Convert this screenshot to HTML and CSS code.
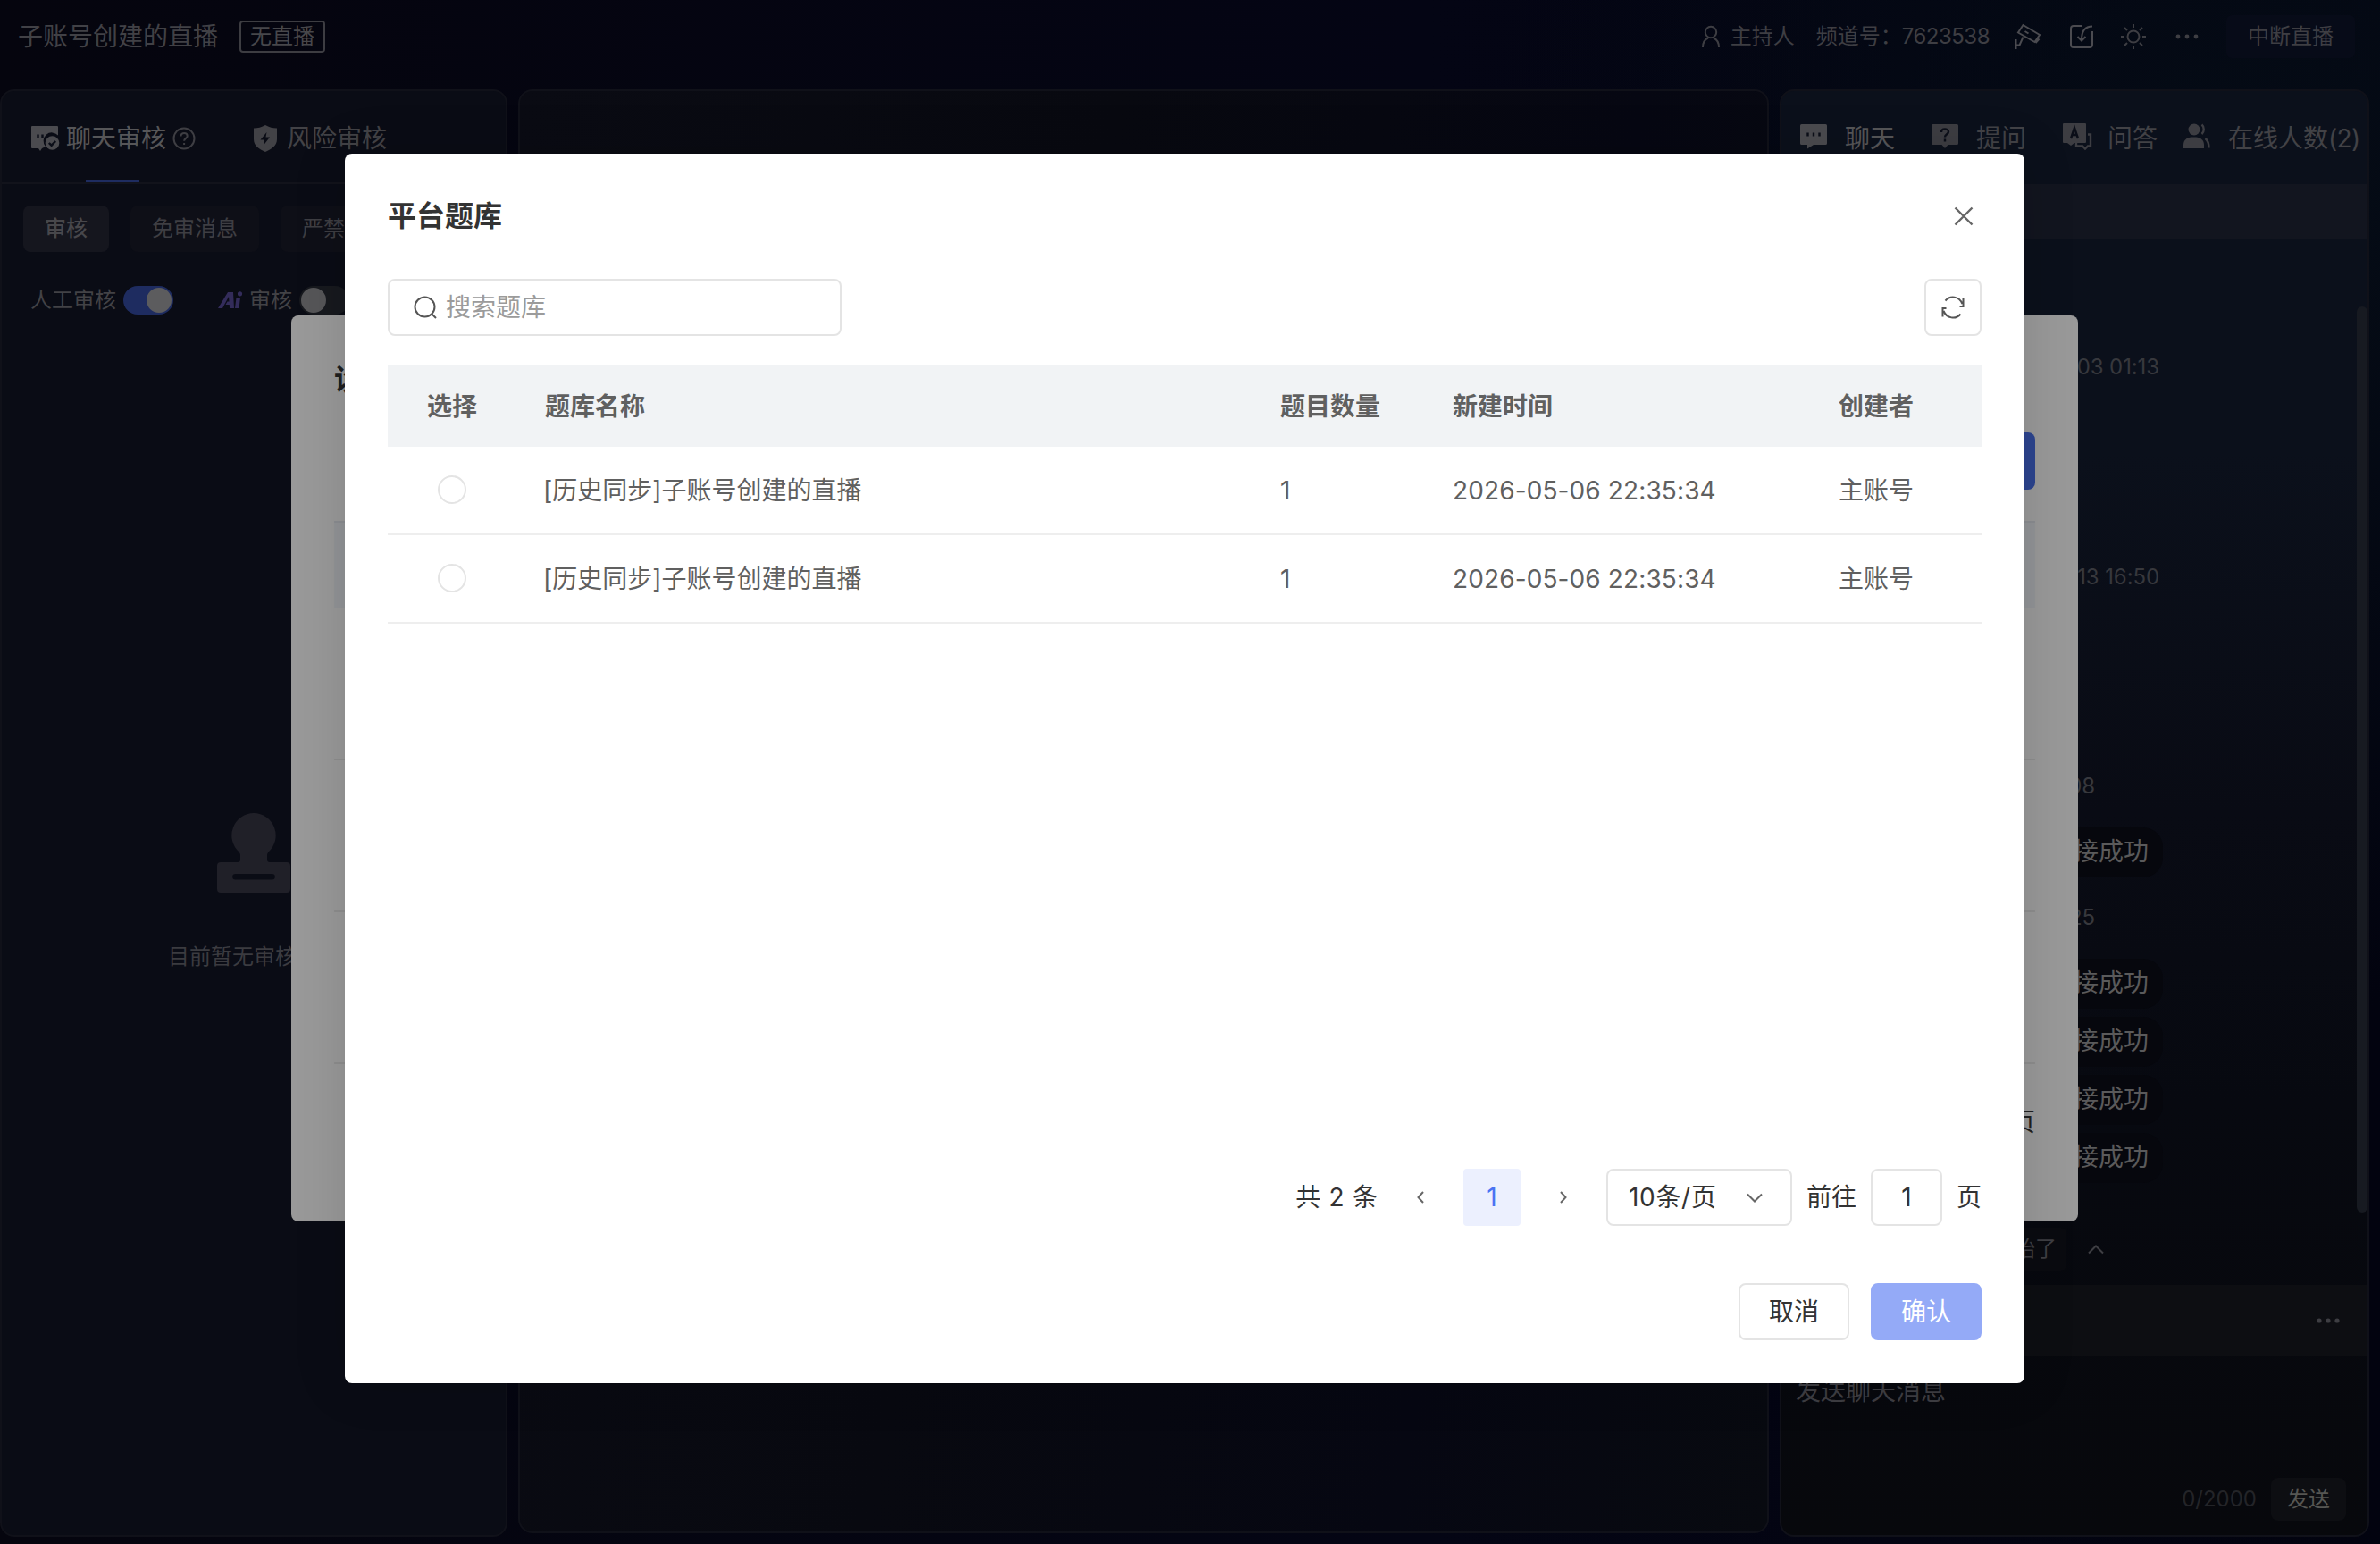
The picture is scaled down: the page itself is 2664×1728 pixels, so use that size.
FILE: index.html
```html
<!DOCTYPE html>
<html lang="zh-CN">
<head>
<meta charset="utf-8">
<title>平台题库</title>
<link rel="stylesheet" href="styles.css">
</head>
<body>
<div class="app">
  <header class="topbar">
    <span class="channel-name">子账号创建的直播</span>
    <span class="live-tag">无直播</span>
    <div class="topbar-right">
      <svg class="i-user" viewBox="0 0 22 26"><circle cx="11" cy="8" r="6.2"/><path d="M2 25c0-6 2.500-9 6-10.500M20 25c0-6-2.500-9-6-10.500"/></svg>
      <span class="role">主持人</span>
      <span class="channel">频道号：<span class="num">7623538</span></span>
      <svg class="i-cam" viewBox="0 0 30 30"><path d="M9.500 2 28 13l-5.500 8L4 10.500zM11.500 9l4 2.500M27.500 17.500l-4 4.500M1.500 18v11M1.500 24.500h4l4-9"/></svg>
      <svg class="i-note" viewBox="0 0 28 28"><path d="M14 2H5a3 3 0 0 0-3 3v18a3 3 0 0 0 3 3h18a3 3 0 0 0 3-3V8M26 2.500c-7 0-12 4-12 15M9.500 14l4.500 4.500 4.500-4.500"/></svg>
      <svg class="i-sun" viewBox="0 0 30 30"><circle cx="15" cy="15" r="6.500"/><path d="M15 1v4M15 25v4M1 15h4M25 15h4M5 5l3 3M22 22l3 3M25 5l-3 3M8 22l-3 3"/></svg>
      <svg class="i-more" viewBox="0 0 26 6"><circle cx="3" cy="3" r="2.400"/><circle cx="13" cy="3" r="2.400"/><circle cx="23" cy="3" r="2.400"/></svg>
      <button class="stop-btn">中断直播</button>
    </div>
  </header>

  <main class="columns">
    <section class="panel audit">
      <div class="audit-tabs">
        <div class="audit-tab active">
          <svg class="i-audit" viewBox="0 0 32 30"><path class="fill" d="M1 1h28a1 1 0 0 1 1 1v9.500a9 9 0 0 0-14 12.500l-4 2-2 3-2-3H1a1 1 0 0 1-1-1V2a1 1 0 0 1 1-1z"/><path class="cut" d="M7.500 10.500v4M12.500 10.500v4"/><circle class="fill" cx="23.500" cy="20" r="7.800"/><path class="cut" d="m19.800 20 2.800 2.700 4.600-4.700"/></svg>
          <span>聊天审核</span>
          <svg class="i-help" viewBox="0 0 26 26"><circle cx="13" cy="13" r="11.500"/><path d="M9.500 10.500c0-4.800 7.200-4.500 7.200-.3 0 2.500-3.600 2.900-3.600 5.600M13.100 18v2"/></svg>
        </div>
        <div class="audit-tab">
          <svg class="i-shield" viewBox="0 0 28 32"><path class="fill" d="M14 1c4 2.500 8.500 3.500 13 3.500V17c0 7-6 11-13 14C7 28 1 24 1 17V4.500C5.500 4.500 10 3.500 14 1z"/><path class="hole" d="M15.500 9 8.500 17.500h4.500L12 23.500l7-9h-4.500z"/></svg>
          <span>风险审核</span>
        </div>
      </div>
      <div class="chips"><span class="chip on">审核</span><span class="chip">免审消息</span><span class="chip">严禁词</span></div>
      <div class="switches">
        <span>人工审核</span><span class="switch on"></span>
        <svg class="i-ai" viewBox="0 0 28 20"><path d="M0 19 11 1h6l1 18h-5l-.2-4H8.500l2-3.500h2L12 6 5 19zM20.500 7h4.500l-1.500 12H19z"/><circle cx="24.500" cy="2.800" r="2.600"/></svg>
        <span>审核</span><span class="switch"></span>
      </div>
      <div class="empty">
        <svg class="i-stamp" viewBox="0 0 82 90"><path d="M41 0a25 25 0 0 1 16.500 43.500Q56 45 56 47v5q0 3 3 3h19a4 4 0 0 1 4 4v26a4 4 0 0 1-4 4H4a4 4 0 0 1-4-4V59a4 4 0 0 1 4-4h19q3 0 3-3v-5q0-2-1.500-3.500A25 25 0 0 1 41 0zM20.500 68a3.300 3.300 0 0 0 0 6.600h41a3.300 3.300 0 0 0 0-6.600z" fill-rule="evenodd"/></svg>
        <span>目前暂无审核消息</span>
      </div>
    </section>

    <section class="panel stage"></section>

    <section class="panel chat">
      <nav class="chat-tabs">
        <div class="ct active"><svg class="i-t" viewBox="0 0 30 30"><path class="fill" d="M1.500 1h27A1.500 1.500 0 0 1 30 2.500v20a1.500 1.500 0 0 1-1.500 1.500H15l-7 4.500V24H1.500A1.500 1.500 0 0 1 0 22.500v-20A1.500 1.500 0 0 1 1.500 1z"/><path class="cut" d="M8.500 10.500v4M15 10.500v4M21.500 10.500v4"/></svg><span>聊天</span></div>
        <div class="ct"><svg class="i-t" viewBox="0 0 30 30"><path class="fill" d="M1.500 1h27A1.500 1.500 0 0 1 30 2.500v20a1.500 1.500 0 0 1-1.500 1.500H18.500L15 28l-3.500-4h-10A1.500 1.500 0 0 1 0 22.500v-20A1.500 1.500 0 0 1 1.500 1z"/><path class="cut" d="M11 10c0-5 8-4.500 8-.5 0 3-4 2.500-4 6M15 17.500v3"/></svg><span>提问</span></div>
        <div class="ct"><svg class="i-qa" viewBox="0 0 32 30"><path class="fill" d="M1 0h24a1 1 0 0 1 1 1v20a1 1 0 0 1-1 1H13l-4 3-4-3H1a1 1 0 0 1-1-1V1a1 1 0 0 1 1-1z"/><path class="cut" d="m9 17 4-12 4 12M10.500 13h5"/><path class="line" d="M28 12.500h3v13h-3l-3 3-3-3h-7V22"/></svg><span>问答</span></div>
        <div class="ct"><svg class="i-people" viewBox="0 0 30 30"><circle class="fill" cx="12" cy="7" r="6.500"/><path class="fill" d="M0 28v-4c0-5 4-8.500 9-8.500h5c5 0 9 3.500 9 8.500v4z"/><path class="line" d="M20.500 1.500c3 2.500 3 8 0 10.500M24.500 17c3 2.500 4 6 4 10.500"/></svg><span>在线人数<span class="num">(2)</span></span></div>
      </nav>
      <div class="notice"></div>
      <div class="messages">
        <time class="t1">03 01:13</time>
        <time class="t2">13 16:50</time>
        <time class="t3">08</time>
        <p class="bubble b1">接成功</p>
        <time class="t4">25</time>
        <p class="bubble b2">接成功</p>
        <p class="bubble">接成功</p>
        <p class="bubble">接成功</p>
        <p class="bubble">接成功</p>
        <i class="scrollbar"></i>
      </div>
      <div class="quick"><span class="quick-pill">始了</span><svg class="i-up" viewBox="0 0 18 12"><path d="m1 10.500 8-8 8 8"/></svg></div>
      <div class="tools"><svg class="i-more" viewBox="0 0 26 6"><circle cx="3" cy="3" r="2.600"/><circle cx="13" cy="3" r="2.600"/><circle cx="23" cy="3" r="2.600"/></svg></div>
      <div class="composer">
        <span class="placeholder">发送聊天消息</span>
        <div class="send-row"><span class="count">0/2000</span><button class="send-btn">发送</button></div>
      </div>
    </section>
  </main>
</div>

<div class="back-modal">
  <h2>设</h2>
  <div class="back-tools"><span class="back-btn"></span></div>
  <div class="back-head"></div>
  <div class="back-row"></div>
  <div class="back-row"></div>
  <div class="back-row"></div>
  <div class="back-pager">页</div>
</div>

<div class="modal" role="dialog">
  <div class="modal-head">
    <h2>平台题库</h2>
    <svg class="i-close" viewBox="0 0 22 22"><path d="m1.500 1.500 19 19M20.500 1.500l-19 19"/></svg>
  </div>
  <div class="modal-tools">
    <div class="search"><svg class="i-search" viewBox="0 0 26 26"><circle cx="12.500" cy="12.500" r="11"/><path d="m20.500 20.500 4.500 4.500"/></svg><span>搜索题库</span></div>
    <button class="refresh"><svg viewBox="0 0 26 26"><path d="M4.500 5.500C10-1 20 .5 23.500 9M24.500 2.500v9.500h-4M21.500 20.500C16 27 6 25.500 2.500 17M1.500 23.500V14h4"/></svg></button>
  </div>
  <div class="table">
    <div class="tr th"><span class="pick">选择</span><span>题库名称</span><span>题目数量</span><span>新建时间</span><span>创建者</span></div>
    <div class="tr"><span class="pick"><i class="radio"></i></span><span class="name">[历史同步]子账号创建的直播</span><span>1</span><span class="date">2026-05-06 22:35:34</span><span>主账号</span></div>
    <div class="tr"><span class="pick"><i class="radio"></i></span><span class="name">[历史同步]子账号创建的直播</span><span>1</span><span class="date">2026-05-06 22:35:34</span><span>主账号</span></div>
  </div>
  <div class="pager">
    <span class="total">共 2 条</span>
    <svg class="i-prev" viewBox="0 0 8 14"><path d="M7 1 1.500 7 7 13"/></svg>
    <span class="page">1</span>
    <svg class="i-next" viewBox="0 0 8 14"><path d="m1 1 5.500 6L1 13"/></svg>
    <div class="size"><span>10条/页</span><svg class="i-down" viewBox="0 0 18 11"><path d="m1 1.500 8 8 8-8"/></svg></div>
    <span class="goto">前往</span>
    <span class="jump">1</span>
    <span>页</span>
  </div>
  <div class="actions"><button class="btn">取消</button><button class="btn primary">确认</button></div>
</div>
</body>
</html>
```

FILE: styles.css
```css
* { box-sizing: border-box; }
body {
  margin: 0;
  width: 2664px;
  height: 1728px;
  overflow: hidden;
  position: relative;
  background: radial-gradient(circle at 95% 15%, #050c16 0, transparent 30%), linear-gradient(90deg, #05050e, #040514 60%, #02030f);
  font: 28px/40px Inter, "Noto Sans CJK SC", sans-serif;
  color: #3e3e43;
}
h2, p { margin: 0; }
button { font: inherit; border: 0; padding: 0; }
svg { display: block; flex: none; fill: none; stroke: currentColor; stroke-width: 2; overflow: visible; }
.fill { fill: currentColor; stroke: none; }
.hole { fill: #0a0c15; stroke: none; }
.cut { stroke: #0b0e18; stroke-width: 2.4; }
.line { stroke-width: 2.4; }
.num { letter-spacing: -.7px; }

.app { display: flex; flex-direction: column; height: 1728px; }

.topbar { height: 100px; padding: 17px 28px 35px 20px; display: flex; align-items: center; }
.channel-name { color: #414146; }
.live-tag { margin-left: 24px; width: 96px; height: 36px; border: 2px solid #3d3d42; border-radius: 4px; font-size: 24px; line-height: 32px; text-align: center; color: #47474b; }
.topbar-right { margin-left: auto; display: flex; align-items: center; font-size: 24px; }
.i-user { width: 22px; height: 26px; margin-right: 11px; }
.role { margin-right: 24px; }
.channel { margin-right: 28px; white-space: nowrap; }
.channel .num { letter-spacing: -.5px; }
.i-cam { width: 30px; height: 30px; margin-right: 31px; color: #4b4b50; }
.i-note { width: 28px; height: 28px; margin-right: 29px; color: #4b4b50; }
.i-sun { width: 30px; height: 30px; margin-right: 32px; }
.i-more { width: 26px; height: 6px; fill: currentColor; stroke: none; }
.stop-btn { margin-left: 31px; width: 144px; height: 48px; border-radius: 6px; background: #070b18; color: #3e3e43; }

.columns { display: grid; grid-template-columns: 568px 1400px 660px; column-gap: 12px; flex: 1; padding-bottom: 8px; }
.panel { border: 2px solid #101119; border-radius: 16px; min-width: 0; }

.audit { background: #0a0c15; display: flex; flex-direction: column; }
.audit-tabs { height: 104px; border-bottom: 2px solid #12131b; display: flex; padding-left: 33px; position: relative; }
.audit-tabs::after { content: ""; position: absolute; left: 94px; bottom: 0; width: 60px; height: 2px; background: #1e2c60; }
.audit-tab { display: flex; align-items: center; height: 105px; color: #424246; margin-right: 64px; }
.audit-tab.active { color: #565658; }
.i-audit { width: 32px; height: 30px; margin-right: 7px; color: #4b4b4f; }
.i-help { width: 26px; height: 26px; margin-left: 7px; color: #3e3e43; }
.i-shield { width: 28px; height: 32px; margin-right: 10px; }
.chips { display: flex; gap: 24px; padding: 24px 0 0 24px; overflow: hidden; }
.chip { height: 52px; line-height: 52px; padding: 0 24px; border-radius: 8px; background: #0e0f17; font-size: 24px; white-space: nowrap; }
.chip.on { background: #15161e; color: #47474b; font-weight: 500; }
.switches { display: flex; align-items: center; height: 32px; margin-top: 38px; padding-left: 32px; font-size: 24px; overflow: hidden; white-space: nowrap; color: #424246; }
.switch { width: 56px; height: 32px; border-radius: 16px; background: #17191e; margin-left: 8px; padding: 2px; flex: none; }
.switch::after { content: ""; display: block; width: 28px; height: 28px; border-radius: 50%; background: #565658; }
.switch.on { background: #1e2c60; }
.switch.on::after { margin-left: 24px; background: #5c5c5e; }
.i-ai { width: 28px; height: 20px; margin: 0 7px 0 50px; fill: #332c5a; stroke: none; }
.empty { display: flex; flex-direction: column; align-items: center; margin-top: 558px; font-size: 24px; color: #3b3b40; }
.i-stamp { width: 82px; height: 90px; fill: #202028; stroke: none; margin-bottom: 51px; }

.stage { background: linear-gradient(100deg, #0a0b13, #080910 40%, #060712 75%, #080a10); margin-bottom: 4px; }

.chat { background: linear-gradient(#0b101b 0, #0b101b 25%, #090b14 50%, #070910 70%, #07080c); display: flex; flex-direction: column; }
.chat-tabs { height: 104px; display: flex; align-items: center; padding: 1px 0 0 21px; white-space: nowrap; }
.ct { display: flex; align-items: center; color: #424246; margin-right: 41px; }
.ct.active { color: #565658; }
.ct svg { margin-right: 20px; margin-top: -3px; color: #3d3d42; }
.ct.active svg { color: #4b4b4f; }
.i-t { width: 30px; height: 30px; }
.ct .i-qa { width: 32px; height: 30px; margin-right: 18px; }
.ct .i-people { width: 30px; height: 30px; margin-left: -12px; }
.notice { height: 61px; background: #12151f; }
.messages { height: 1107px; position: relative; display: flex; flex-direction: column; align-items: flex-end; }
.messages time { font-size: 24px; letter-spacing: -.1px; line-height: 40px; margin-right: 233px; color: #37383d; }
.t1 { margin-top: 124px; }
.t2 { margin-top: 195px; }
.messages .t3 { margin: 194px 305px 0 0; }
.messages .t4 { margin: 25px 305px 0 0; }
.bubble { width: 200px; height: 56px; line-height: 55px; border-radius: 22px; background: #06070d; text-align: right; padding-right: 16px; margin: 0 229px 9px 0; color: #5a5a5b; }
.b1 { margin: 26px 229px 0 0; }
.b2 { margin-top: 26px; }
.scrollbar { position: absolute; right: 0; top: 76px; width: 12px; height: 1014px; border-radius: 6px; background: #171a21; }
.quick { height: 64px; padding-bottom: 16px; display: flex; align-items: center; }
.quick-pill { width: 300px; margin-left: 19px; height: 48px; border-radius: 6px; background: #0a0b10; font-size: 24px; line-height: 47px; text-align: right; padding-right: 11px; }
.i-up { width: 18px; height: 12px; margin-left: 24px; }
.tools { height: 80px; background: #0d0e12; display: flex; align-items: center; justify-content: flex-end; padding-right: 31px; }
.composer { flex: 1; display: flex; flex-direction: column; justify-content: space-between; padding: 19px 24px 16px 16px; }
.send-row { display: flex; align-items: center; justify-content: flex-end; font-size: 24px; color: #232428; }
.send-btn { margin-left: 16px; width: 84px; height: 48px; border-radius: 8px; background: #0d0e12; color: #565653; }

.back-modal { position: absolute; left: 326px; top: 353px; width: 2000px; height: 1014px; border-radius: 8px; background: #999; padding: 48px; display: flex; flex-direction: column; color: #1f1f1f; }
.back-modal h2 { font-size: 32px; line-height: 48px; }
.back-tools { display: flex; justify-content: flex-end; margin: 35px 0 35px; }
.back-btn { width: 200px; height: 64px; border-radius: 8px; background: #2c448f; }
.back-head { height: 98px; background: #929497; border-top: 2px solid #8b8d91; }
.back-row { height: 170px; border-bottom: 2px solid #8e8e8e; }
.back-pager { text-align: right; margin-top: 45px; }

.modal { position: absolute; left: 386px; top: 172px; width: 1880px; height: 1376px; border-radius: 8px; background: #fff; padding: 48px; display: flex; flex-direction: column; color: #333; box-shadow: 0 0 60px rgba(0, 0, 0, .14); }
.modal-head { display: flex; align-items: center; justify-content: space-between; height: 44px; }
.modal-head h2 { font-size: 32px; line-height: 44px; font-weight: 700; }
.i-close { width: 22px; height: 22px; margin-right: 9px; color: #666; stroke-width: 2.4; }
.modal-tools { display: flex; justify-content: space-between; margin: 48px 0 32px; }
.search { width: 508px; height: 64px; border: 2px solid #e4e4e4; border-radius: 8px; display: flex; align-items: center; padding: 0 0 1px 27px; color: #9b9b9b; }
.i-search { width: 26px; height: 26px; margin-right: 10px; color: #555; }
.refresh { width: 64px; height: 64px; border: 2px solid #e4e4e4; border-radius: 8px; background: #fff; color: #555; display: flex; align-items: center; justify-content: center; }
.refresh svg { width: 26px; height: 26px; }
.tr { display: grid; grid-template-columns: 176px 823px 193px 432px 160px; height: 99px; align-items: center; border-bottom: 2px solid #eee; color: #606060; line-height: 42px; }
.tr span { padding-top: 1px; }
.tr.th { height: 92px; background: #f1f3f5; border: 0; font-weight: 700; }
.tr .pick { width: 144px; display: flex; justify-content: center; padding-top: 0; }
.tr.th .pick { padding-top: 1px; }
.radio { width: 32px; height: 32px; border: 2px solid #e4e4e4; border-radius: 50%; margin-top: -1px; }
.name { margin-left: -2px; }
.date { letter-spacing: .12px; }
.pager { display: flex; align-items: center; justify-content: flex-end; height: 64px; margin-top: auto; }
.pager svg { color: #666; }
.total { word-spacing: 1.5px; }
.i-prev, .i-next { width: 8px; height: 14px; }
.i-prev { margin: 0 44px; }
.page { width: 64px; height: 64px; line-height: 64px; text-align: center; border-radius: 4px; background: #ecf0fe; color: #4a73f3; }
.i-next { margin: 0 44px; }
.size { width: 208px; height: 64px; border: 2px solid #e4e4e4; border-radius: 8px; display: flex; align-items: center; justify-content: space-between; padding: 0 31px 0 23px; letter-spacing: .7px; }
.i-down { width: 18px; height: 11px; }
.goto { margin: 0 16px; }
.jump { width: 80px; height: 64px; line-height: 60px; border: 2px solid #e4e4e4; border-radius: 8px; text-align: center; margin-right: 16px; }
.actions { display: flex; justify-content: flex-end; gap: 24px; margin-top: 64px; }
.btn { width: 124px; height: 64px; border: 2px solid #e4e4e4; border-radius: 8px; background: #fff; color: #333; line-height: 59px; }
.btn.primary { border-color: #94aaf7; background: #94aaf7; color: #fff; }
```
